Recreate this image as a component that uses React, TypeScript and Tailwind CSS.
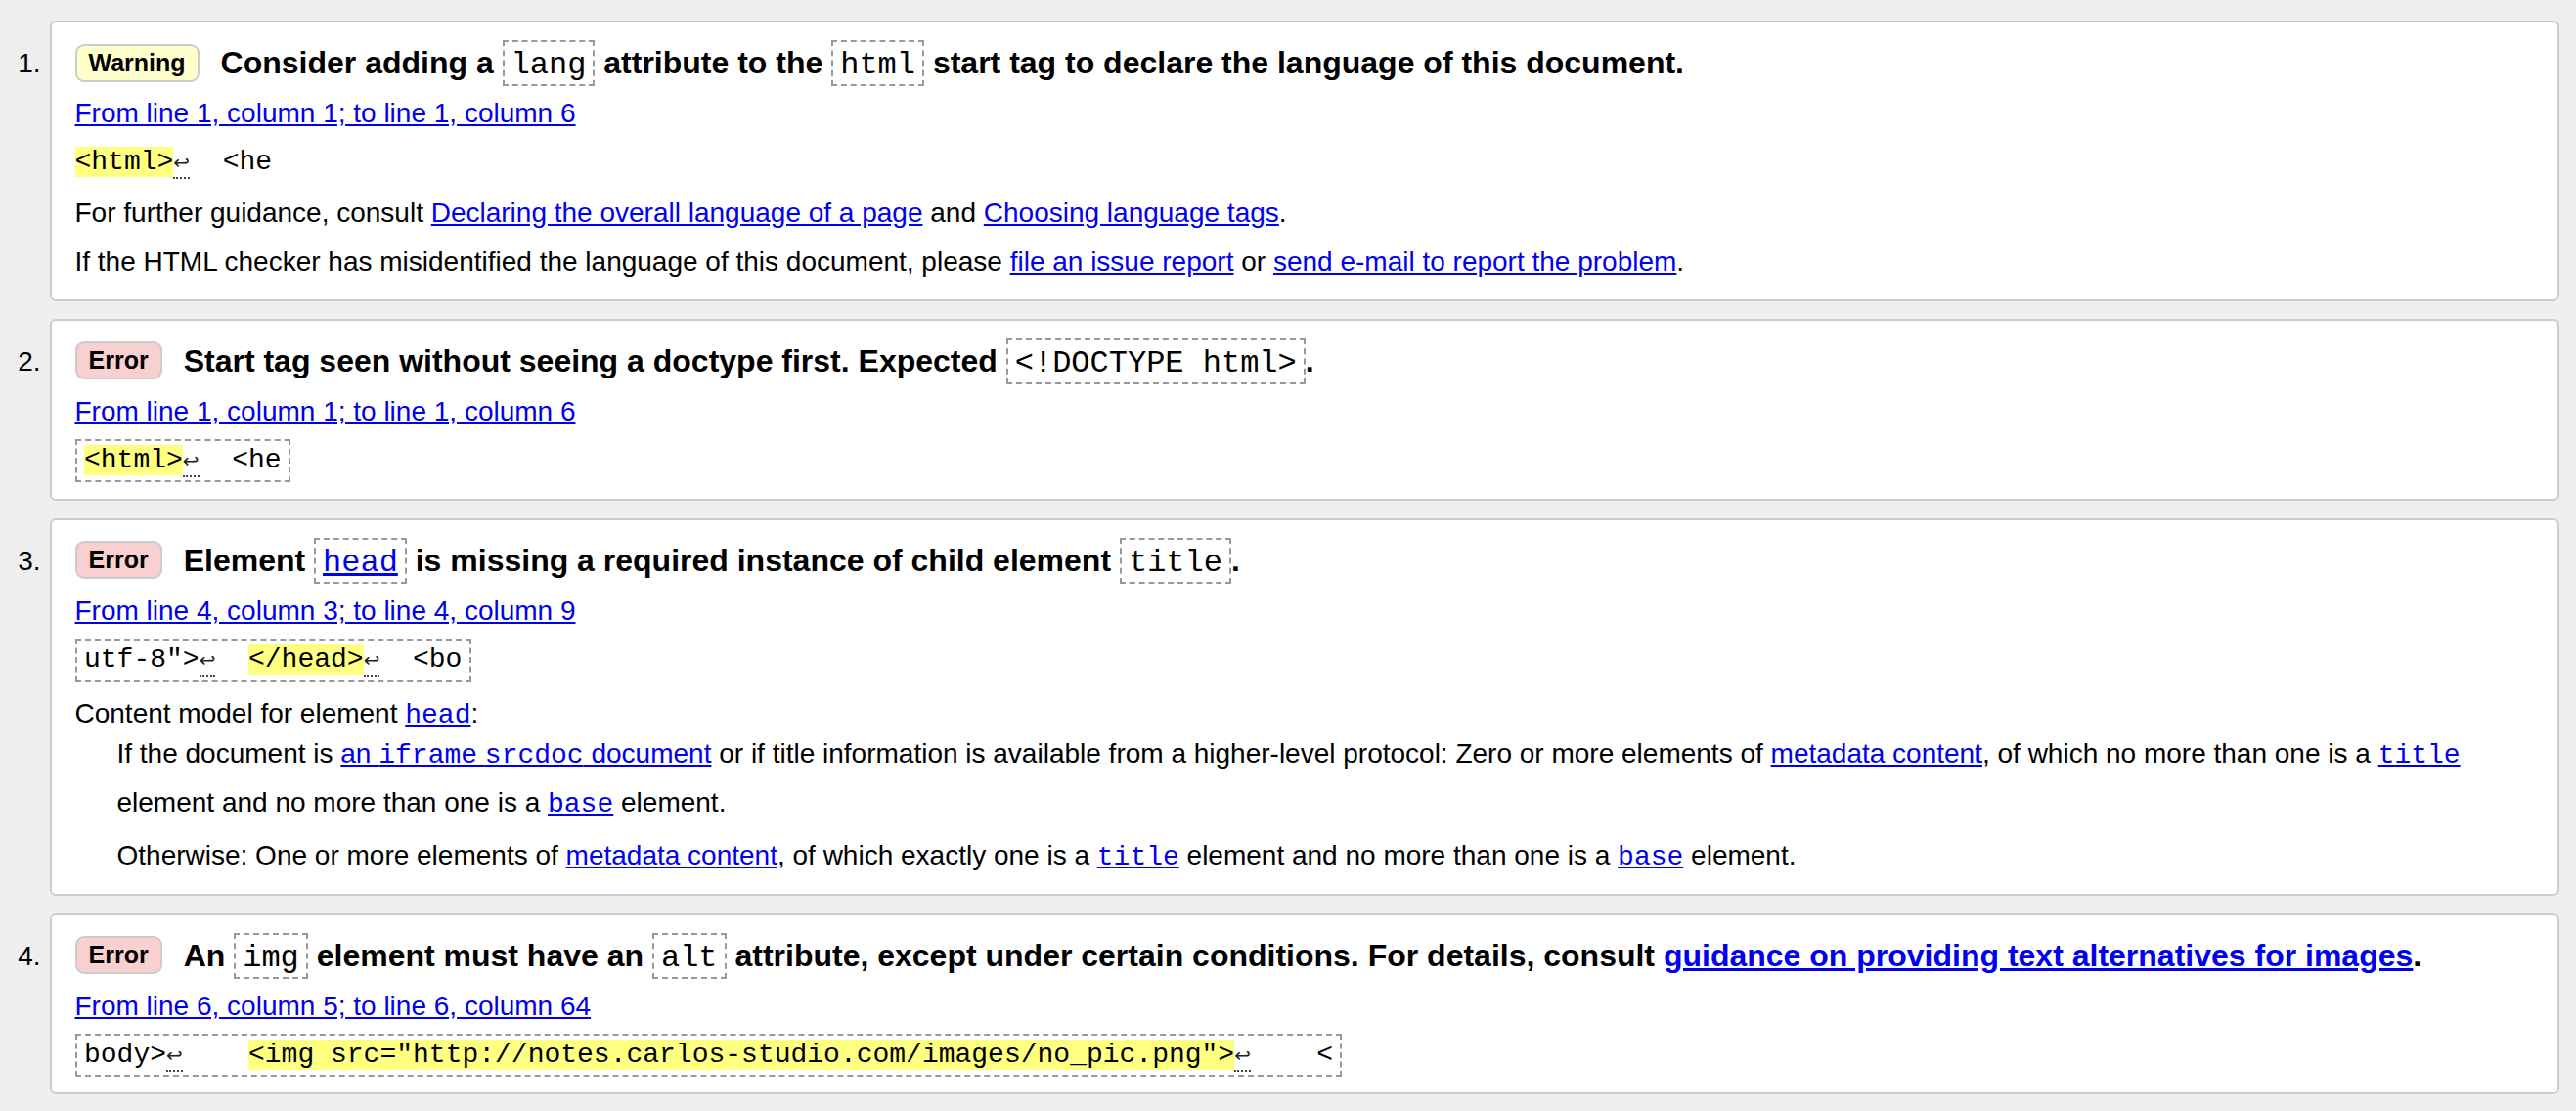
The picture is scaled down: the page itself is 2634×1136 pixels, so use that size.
import React from "react";

const MONO = "font-['Liberation_Mono',monospace]";

function HCode({ children }: { children: React.ReactNode }) {
  return (
    <span className="font-['Liberation_Mono',monospace] font-normal leading-none border-2 border-dashed border-[#999] px-[7px] pt-[5px] pb-[1px]">
      {children}
    </span>
  );
}

function Hl({ children }: { children: React.ReactNode }) {
  return <span className="bg-[#ffff80]">{children}</span>;
}

function LB() {
  return (
    <span className="border-b-2 border-dotted border-[#444]">
      <span className="font-['DejaVu_Sans',sans-serif] text-[20px] leading-none text-[#222]">↩</span>
    </span>
  );
}

function A({ children, mono }: { children: React.ReactNode; mono?: boolean }) {
  return (
    <a
      href="#"
      className={
        mono
          ? "text-[#0000ee] underline font-['Liberation_Mono',monospace] leading-none"
          : "text-[#0000ee] underline"
      }
    >
      {children}
    </a>
  );
}

function Badge({ kind }: { kind: "Warning" | "Error" }) {
  return (
    <span
      className={
        kind === "Warning"
          ? "shrink-0 inline-block h-[39px] border-2 border-[#ccc] rounded-[9px] bg-[#ffffcc] px-[12px] text-[25px] font-bold leading-[35px]"
          : "shrink-0 inline-block h-[39px] border-2 border-[#ccc] rounded-[9px] bg-[#f8d0d0] px-[12px] text-[25px] font-bold leading-[35px]"
      }
    >
      {kind}
    </span>
  );
}

function Heading({ kind, children }: { kind: "Warning" | "Error"; children: React.ReactNode }) {
  return (
    <div className="flex items-center">
      <Badge kind={kind} />
      <div className="ml-[22px] text-[32px] font-bold leading-[40px] whitespace-nowrap">{children}</div>
    </div>
  );
}

function Loc({ children }: { children: React.ReactNode }) {
  return (
    <div className="mt-[14px] leading-[36px]">
      <A>{children}</A>
    </div>
  );
}

function Extract({ children, boxed }: { children: React.ReactNode; boxed?: boolean }) {
  return (
    <div
      className={
        boxed
          ? "mt-[10px] w-fit border-2 border-dashed border-[#999] px-[7.5px] py-[4px] leading-[32px] whitespace-pre font-['Liberation_Mono',monospace]"
          : "mt-[10px] w-fit py-[6px] leading-[32px] whitespace-pre font-['Liberation_Mono',monospace]"
      }
    >
      {children}
    </div>
  );
}

function Item({ n, children, pb }: { n: number; children: React.ReactNode; pb: string }) {
  return (
    <li className="flex">
      <span className="w-[51px] shrink-0 text-right pr-[9.5px] pt-[26px] leading-[36px]">{n}.</span>
      <div className={"flex-1 bg-white border-2 border-[#ccc] rounded-[6px] pl-[23.5px] pr-[24px] pt-[21px] " + pb}>
        {children}
      </div>
    </li>
  );
}

export default function App() {
  return (
    <div className="min-h-screen bg-[#efefef] pt-[21px] pr-[17px] text-black text-[28px] font-['Liberation_Sans',Arial,sans-serif]">
      <ol className="flex flex-col gap-[18px]">
        <Item n={1} pb="pb-[20px]">
          <Heading kind="Warning">
            Consider adding a <HCode>lang</HCode> attribute to the <HCode>html</HCode> start tag to declare the
            language of this document.
          </Heading>
          <Loc>From line 1, column 1; to line 1, column 6</Loc>
          <Extract>
            <Hl>{"<html>"}</Hl>
            <LB />
            {"  <he"}
          </Extract>
          <p className="mt-[11.5px] leading-[36px]">
            For further guidance, consult <A>Declaring the overall language of a page</A> and{" "}
            <A>Choosing language tags</A>.
          </p>
          <p className="mt-[14px] leading-[36px]">
            If the HTML checker has misidentified the language of this document, please <A>file an issue report</A>{" "}
            or <A>send e-mail to report the problem</A>.
          </p>
        </Item>

        <Item n={2} pb="pb-[17px]">
          <Heading kind="Error">
            Start tag seen without seeing a doctype first. Expected <HCode>{"<!DOCTYPE html>"}</HCode>.
          </Heading>
          <Loc>From line 1, column 1; to line 1, column 6</Loc>
          <Extract boxed>
            <Hl>{"<html>"}</Hl>
            <LB />
            {"  <he"}
          </Extract>
        </Item>

        <Item n={3} pb="pb-[14px]">
          <Heading kind="Error">
            Element{" "}
            <HCode>
              <a href="#" className="text-[#0000ee] underline">
                head
              </a>
            </HCode>{" "}
            is missing a required instance of child element <HCode>title</HCode>.
          </Heading>
          <Loc>From line 4, column 3; to line 4, column 9</Loc>
          <Extract boxed>
            {'utf-8">'}
            <LB />
            {"  "}
            <Hl>{"</head>"}</Hl>
            <LB />
            {"  <bo"}
          </Extract>
          <p className="mt-[15px] leading-[36px]">
            Content model for element <A mono>head</A>:
          </p>
          <div className="ml-[43px]">
            <p className="mt-[-2px] leading-[50px]">
              If the document is{" "}
              <a href="#" className="text-[#0000ee] underline">
                an <span className={MONO + " leading-none"}>iframe</span>{" "}
                <span className={MONO + " leading-none"}>srcdoc</span> document
              </a>{" "}
              or if title information is available from a higher-level protocol: Zero or more elements of{" "}
              <A>metadata content</A>, of which no more than one is a <A mono>title</A>
              <br />
              element and no more than one is a <A mono>base</A> element.
            </p>
            <p className="mt-[4px] leading-[50px]">
              Otherwise: One or more elements of <A>metadata content</A>, of which exactly one is a{" "}
              <A mono>title</A> element and no more than one is a <A mono>base</A> element.
            </p>
          </div>
        </Item>

        <Item n={4} pb="pb-[16px]">
          <Heading kind="Error">
            An <HCode>img</HCode> element must have an <HCode>alt</HCode> attribute, except under certain
            conditions. For details, consult{" "}
            <a href="#" className="text-[#0000ee] underline">
              guidance on providing text alternatives for images
            </a>
            .
          </Heading>
          <Loc>From line 6, column 5; to line 6, column 64</Loc>
          <Extract boxed>
            {"body>"}
            <LB />
            {"    "}
            <Hl>{'<img src="http://notes.carlos-studio.com/images/no_pic.png">'}</Hl>
            <LB />
            {"    <"}
          </Extract>
        </Item>
      </ol>
    </div>
  );
}
